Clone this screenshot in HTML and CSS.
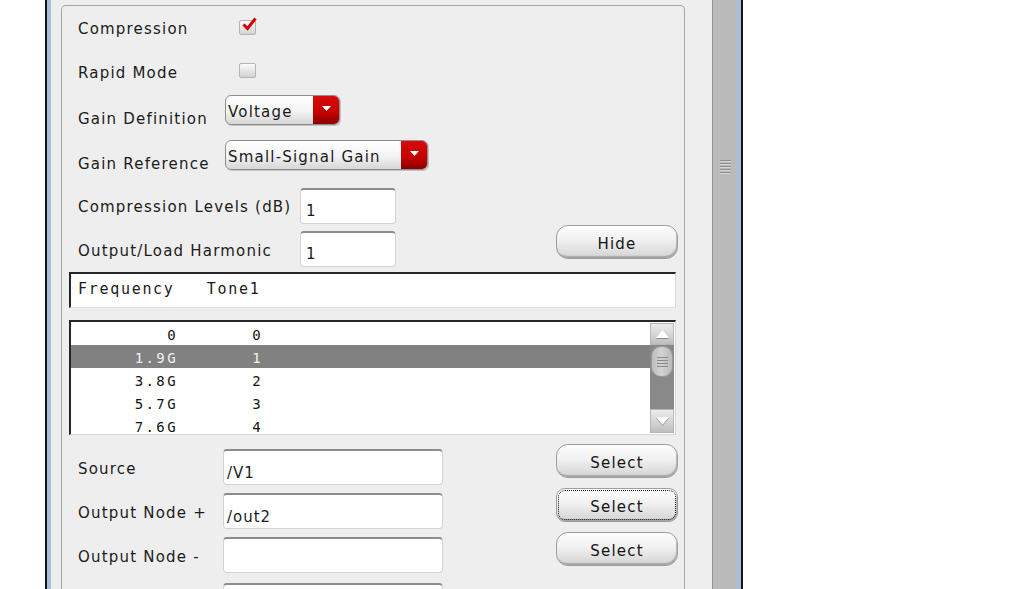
FILE: index.html
```html
<!DOCTYPE html>
<html>
<head>
<meta charset="utf-8">
<title>Compression</title>
<link rel="stylesheet" href="styles.css">
</head>
<body>
<div class="window">
  <div class="edge-black"></div>
  <div class="edge-blue"></div>
  <div class="main">
    <div class="group">
      <div class="row row-a">
        <span class="label w-check">Compression</span>
        <span class="checkbox">
          <svg class="check" viewBox="0 0 16 14" width="16" height="14"><path d="M2.5 7.5 L6.5 11.5 L14.5 1.5" fill="none" stroke="#d30000" stroke-width="3"/></svg>
        </span>
      </div>
      <div class="row row-b">
        <span class="label w-check">Rapid Mode</span>
        <span class="checkbox"></span>
      </div>
      <div class="row row-c">
        <span class="label w-combo">Gain Definition</span>
        <div class="combo combo-short">
          <span class="combo-text">Voltage</span>
          <span class="combo-btn"><svg viewBox="0 0 9 5" width="9" height="5"><polygon points="0,0 9,0 4.5,5" fill="#fff"/></svg></span>
        </div>
      </div>
      <div class="row row-d">
        <span class="label w-combo">Gain Reference</span>
        <div class="combo combo-long">
          <span class="combo-text">Small-Signal Gain</span>
          <span class="combo-btn"><svg viewBox="0 0 9 5" width="9" height="5"><polygon points="0,0 9,0 4.5,5" fill="#fff"/></svg></span>
        </div>
      </div>
      <div class="row row-e">
        <span class="label w-field">Compression Levels (dB)</span>
        <div class="field field-short">1</div>
      </div>
      <div class="row row-f">
        <span class="label w-field">Output/Load Harmonic</span>
        <div class="field field-short">1</div>
        <button class="btn">Hide</button>
      </div>

      <div class="table-head">Frequency   Tone1</div>

      <div class="list">
        <div class="list-rows">
          <div class="list-row"><span class="c1">0</span><span class="c2">0</span></div>
          <div class="list-row selected"><span class="c1">1.9G</span><span class="c2">1</span></div>
          <div class="list-row"><span class="c1">3.8G</span><span class="c2">2</span></div>
          <div class="list-row"><span class="c1">5.7G</span><span class="c2">3</span></div>
          <div class="list-row"><span class="c1">7.6G</span><span class="c2">4</span></div>
        </div>
        <div class="sbar">
          <div class="sbar-btn"><svg viewBox="0 0 13 8" width="13" height="8"><polygon points="0,8 6.5,0 13,8" fill="#fff"/></svg></div>
          <div class="sbar-track">
            <div class="sbar-thumb"><span class="grip"></span></div>
          </div>
          <div class="sbar-btn sbar-btn-down"><svg viewBox="0 0 13 8" width="13" height="8"><polygon points="0,0 13,0 6.5,8" fill="#fff"/></svg></div>
        </div>
      </div>

      <div class="row row-g row-first">
        <span class="label w-node">Source</span>
        <div class="field field-long">/V1</div>
        <button class="btn">Select</button>
      </div>
      <div class="row row-g">
        <span class="label w-node">Output Node +</span>
        <div class="field field-long">/out2</div>
        <button class="btn focused">Select</button>
      </div>
      <div class="row row-g">
        <span class="label w-node">Output Node -</span>
        <div class="field field-long"></div>
        <button class="btn">Select</button>
      </div>
      <div class="row row-j">
        <span class="label w-node"></span>
        <div class="field field-long"></div>
      </div>
    </div>
  </div>
  <div class="vstrip"><span class="vgrip"></span></div>
  <div class="edge-blue"></div>
  <div class="edge-black"></div>
</div>
</body>
</html>
```

FILE: styles.css
```css
html, body {
  margin: 0;
  padding: 0;
  background: #ffffff;
  overflow: hidden;
}

body {
  font-family: "DejaVu Sans", "Verdana", sans-serif;
  font-size: 15px;
  color: #1b1b1b;
}

.window {
  margin-left: 45px;
  width: 698px;
  height: 589px;
  display: flex;
  overflow: hidden;
}

.edge-black {
  flex: none;
  width: 2px;
  background: #151515;
}

.edge-blue {
  flex: none;
  width: 4px;
  background: #a8bedc;
}

.main {
  flex: none;
  width: 661px;
  background: #eeeeee;
  padding-left: 10px;
  box-sizing: border-box;
}

.group {
  width: 624px;
  height: 640px;
  margin-top: 5px;
  border: 1px solid #a6a6a6;
  border-bottom: none;
  border-radius: 5px 5px 0 0;
  box-sizing: border-box;
}

.row {
  display: flex;
  align-items: flex-start;
  padding-left: 16px;
  padding-right: 6px;
}

.label {
  flex: none;
  letter-spacing: 1.2px;
  line-height: 18px;
  white-space: nowrap;
}

.w-check { width: 161px; }
.w-combo { width: 147px; }
.w-field { width: 222px; }
.w-node { width: 145px; }

.row-a { height: 44px; }
.row-a .label { margin-top: 14px; }
.row-a .checkbox { margin-top: 14px; }

.row-b { height: 44px; }
.row-b .label { margin-top: 14px; }
.row-b .checkbox { margin-top: 13px; }

.row-c { height: 44px; }
.row-c .label { margin-top: 16px; }
.row-c .combo { margin-top: 1px; }

.row-d { height: 44px; }
.row-d .label { margin-top: 17px; }
.row-d .combo { margin-top: 2px; }

.row-e { height: 43px; }
.row-e .label { margin-top: 16px; }
.row-e .field { margin-top: 6px; }

.row-f { height: 45px; }
.row-f .label { margin-top: 17px; }
.row-f .field { margin-top: 6px; }
.row-f .btn { margin-top: 0; }

.row-g { height: 44px; }
.row-g .label { margin-top: 16px; }
.row-g .field { margin-top: 5px; }

.row-first { margin-top: 9px; }

.row-j { height: 40px; }
.row-j .field { margin-top: 7px; }

/* checkbox */
.checkbox {
  position: relative;
  flex: none;
  width: 15px;
  height: 13px;
  border: 1px solid #b4b4b4;
  border-radius: 2px;
  background: linear-gradient(#fbfbfb, #d2d2d2);
}

.check {
  position: absolute;
  left: 1px;
  top: -4px;
}

/* combo box */
.combo {
  flex: none;
  display: flex;
  height: 30px;
  border: 1px solid #8e8e8e;
  border-radius: 6px;
  box-sizing: border-box;
  background: linear-gradient(#ffffff, #f3f3f3 55%, #d6d6d6);
  box-shadow: 1px 1px 0 rgba(0, 0, 0, 0.18);
  overflow: hidden;
}

.combo-short { width: 115px; }
.combo-long { width: 203px; }

.combo-text {
  flex: 1;
  padding: 2px 0 0 2px;
  letter-spacing: 1.2px;
  line-height: 28px;
  white-space: nowrap;
}

.combo-btn {
  flex: none;
  width: 26px;
  display: flex;
  align-items: center;
  justify-content: center;
  padding-bottom: 3px;
  box-sizing: border-box;
  background: linear-gradient(#d90b0b, #c40000 60%, #8a0000);
}

/* text fields */
.field {
  flex: none;
  height: 36px;
  box-sizing: border-box;
  background: #ffffff;
  border: 1px solid #d2d2d2;
  border-top: 2px solid #8c8c8c;
  border-radius: 4px;
  padding-top: 12px;
  line-height: 18px;
  letter-spacing: 1px;
}

.field-short {
  width: 96px;
  padding-left: 5px;
}

.field-long {
  width: 220px;
  padding-left: 3px;
  padding-top: 13px;
}

/* buttons */
.btn {
  flex: none;
  margin-left: auto;
  width: 122px;
  height: 34px;
  border: 1px solid #9d9d9d;
  border-radius: 12px;
  background: linear-gradient(#fefefe, #f0f0f0 45%, #d4d4d4);
  box-shadow: inset -1px -2px 1px rgba(0, 0, 0, 0.22);
  font-family: "DejaVu Sans", "Verdana", sans-serif;
  font-size: 15px;
  letter-spacing: 1.2px;
  color: #151515;
  padding: 3px 0 0 0;
}

.btn.focused {
  outline: 1px dotted #1a1a1a;
  outline-offset: -3px;
  border-radius: 9px;
}

/* table header */
.table-head {
  margin: 2px 8px 0 7px;
  height: 36px;
  box-sizing: border-box;
  background: #ffffff;
  border-top: 2px solid #262626;
  border-left: 2px solid #262626;
  border-right: 1px solid #d8d8d8;
  border-bottom: 1px solid #e2e2e2;
  padding: 6px 0 0 7px;
  font-family: "DejaVu Sans Mono", monospace;
  font-size: 15px;
  letter-spacing: 1.7px;
  line-height: 18px;
  white-space: pre;
}

/* list */
.list {
  margin: 12px 8px 0 7px;
  height: 115px;
  box-sizing: border-box;
  background: #ffffff;
  border-top: 2px solid #262626;
  border-left: 2px solid #262626;
  border-right: 1px solid #d8d8d8;
  border-bottom: 1px solid #d8d8d8;
  display: flex;
  overflow: hidden;
}

.list-rows {
  flex: 1;
  font-family: "DejaVu Sans Mono", monospace;
  font-size: 14px;
  letter-spacing: 2.4px;
}

.list-row {
  display: flex;
  height: 23px;
  box-sizing: border-box;
  padding-top: 2px;
  line-height: 23px;
  color: #141414;
}

.list-row.selected {
  background: #818181;
  color: #f2f2f2;
}

.c1 {
  width: 107px;
  text-align: right;
}

.c2 {
  width: 85px;
  text-align: right;
}

/* scrollbar inside list */
.sbar {
  flex: none;
  width: 24px;
  margin: 1px 1px 1px 0;
  display: flex;
  flex-direction: column;
}

.sbar-btn {
  flex: none;
  height: 22px;
  box-sizing: border-box;
  border: 1px solid #b6b6b6;
  background: linear-gradient(#ececec, #d2d2d2 60%, #bdbdbd);
  display: flex;
  align-items: center;
  justify-content: center;
}

.sbar-btn svg {
  filter: drop-shadow(0 1px 0 #8a8a8a);
}

.sbar-btn-down {
  height: 24px;
}

.sbar-track {
  flex: 1;
  background: #898989;
  padding: 1px 1px 0 1px;
}

.sbar-thumb {
  height: 31px;
  box-sizing: border-box;
  border: 1px solid #9a9a9a;
  border-radius: 10px;
  background: linear-gradient(90deg, #bdbdbd, #d2d2d2 45%, #bababa);
  display: flex;
  align-items: center;
  justify-content: center;
}

.grip {
  width: 11px;
  height: 10px;
  background: repeating-linear-gradient(#8a8a8a 0 1px, transparent 1px 3px);
}

/* window scroll strip */
.vstrip {
  flex: none;
  width: 25px;
  box-sizing: border-box;
  background: #bababa;
  border-left: 1px solid #929292;
  padding: 160px 0 0 7px;
}

.vgrip {
  display: block;
  width: 11px;
  height: 15px;
  background: repeating-linear-gradient(#8e8e8e 0 1px, #d6d6d6 1px 2px, transparent 2px 3px);
}
```
